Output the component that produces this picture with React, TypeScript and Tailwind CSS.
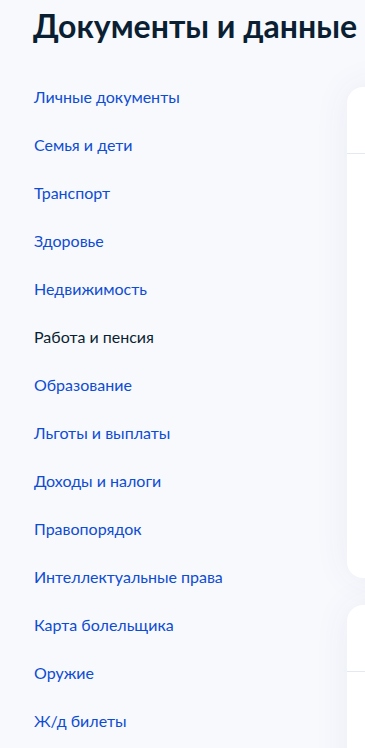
import React from 'react';

const items = [
  'Личные документы',
  'Семья и дети',
  'Транспорт',
  'Здоровье',
  'Недвижимость',
  'Работа и пенсия',
  'Образование',
  'Льготы и выплаты',
  'Доходы и налоги',
  'Правопорядок',
  'Интеллектуальные права',
  'Карта болельщика',
  'Оружие',
  'Ж/д билеты',
];

const Card: React.FC<{ body: number; head: number }> = ({ body, head }) => (
  <div className="bg-white rounded-2xl shadow-[0_0_36px_rgba(40,70,160,0.07)] flex flex-col">
    <div style={{ height: head }} className="border-b border-[#e3e8f3]" />
    <div style={{ height: body }} />
  </div>
);

export default function App() {
  return (
    <div className="min-h-[748px] h-[748px] overflow-hidden bg-[#f8f9fd] font-['Lato','Open_Sans',sans-serif]">
      <h1 className="pl-[33px] pt-[6px] text-[32px] leading-[40px] font-bold text-[#0b1f33] whitespace-nowrap">
        Документы и данные
      </h1>
      <div className="flex mt-[27px]">
        <nav className="w-[347px] shrink-0 pl-[34px] flex flex-col">
          {items.map((t) => (
            <a
              key={t}
              className={`py-3 text-[16px] leading-6 ${t === 'Работа и пенсия' ? 'text-[#0b1f33]' : 'text-[#0d4cd3]'}`}
            >
              {t}
            </a>
          ))}
        </nav>
        <div className="w-[420px] shrink-0 flex flex-col gap-[27px] pt-[14px]">
          <Card head={67} body={424} />
          <Card head={67} body={300} />
        </div>
      </div>
    </div>
  );
}
